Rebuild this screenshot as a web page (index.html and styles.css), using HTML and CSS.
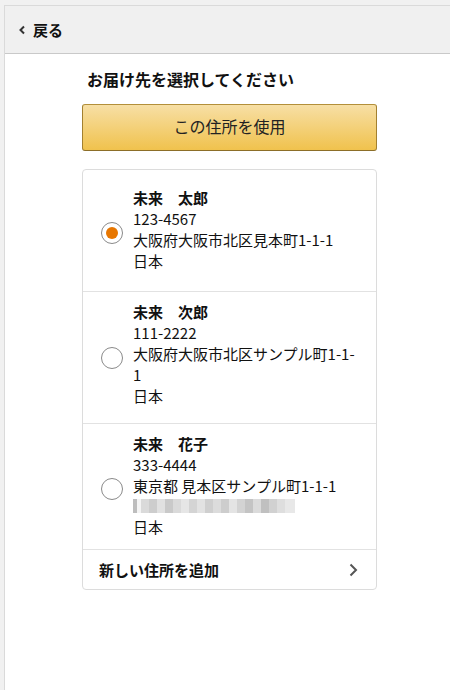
FILE: index.html
```html
<!DOCTYPE html>
<html lang="ja">
<head>
    <meta charset="UTF-8">
    <meta name="viewport" content="width=device-width, initial-scale=1.0">
    <title>お届け先を選択</title>
    <link rel="stylesheet" href="styles.css">
</head>
<body>
    <div class="frame">
        <header class="topbar">
            <a class="back" href="#">
                <svg class="back-icon" width="8" height="10" viewBox="0 0 8 10"><polyline points="6,1.5 2.5,5 6,8.5" fill="none" stroke="#333" stroke-width="2"/></svg>
                戻る
            </a>
        </header>

        <main class="content">
            <h1 class="title">お届け先を選択してください</h1>
            <button class="use-btn" type="button">この住所を使用</button>

            <ul class="addr-list">
                <li class="addr-row is-first">
                    <span class="radio checked"></span>
                    <div class="addr">
                        <div class="addr-name">未来　太郎</div>
                        <div>123-4567</div>
                        <div>大阪府大阪市北区見本町1-1-1</div>
                        <div>日本</div>
                    </div>
                </li>
                <li class="addr-row">
                    <span class="radio"></span>
                    <div class="addr">
                        <div class="addr-name">未来　次郎</div>
                        <div>111-2222</div>
                        <div>大阪府大阪市北区サンプル町1-1-1</div>
                        <div>日本</div>
                    </div>
                </li>
                <li class="addr-row is-last">
                    <span class="radio"></span>
                    <div class="addr">
                        <div class="addr-name">未来　花子</div>
                        <div>333-4444</div>
                        <div>東京都 見本区サンプル町1-1-1</div>
                        <div class="masked"><span class="mosaic"></span></div>
                        <div>日本</div>
                    </div>
                </li>
                <li class="add-row">
                    <span>新しい住所を追加</span>
                    <svg width="10" height="14" viewBox="0 0 10 14"><polyline points="2.5,1.5 8,7 2.5,12.5" fill="none" stroke="#555" stroke-width="2"/></svg>
                </li>
            </ul>
        </main>
    </div>
</body>
</html>
```

FILE: styles.css
```css
*{ box-sizing: border-box; }
html,body{ margin: 0; padding: 0; }
body{
    background: #f1f1f1;
    font-family: "Noto Sans CJK JP", "Noto Sans", sans-serif;
    color: #111;
}

.frame{
    margin: 5px 0 0 4px;
    min-height: 685px;
    background: #fff;
    border-top: 1px solid #dadada;
    border-left: 1px solid #dadada;
}

.topbar{
    height: 48px;
    background: #f0f0f0;
    border-bottom: 1px solid #c9c9c9;
    display: flex;
    align-items: center;
    padding-left: 13px;
}
.back{
    display: flex;
    align-items: center;
    gap: 7px;
    color: #111;
    text-decoration: none;
    font-size: 15px;
    font-weight: bold;
}

.content{
    width: 295px;
    margin-left: 77px;
    padding-top: 14px;
}
.title{
    margin: 0 0 14px 5px;
    font-size: 16px;
    line-height: 22px;
    font-weight: bold;
}
.use-btn{
    display: block;
    width: 295px;
    height: 47px;
    padding: 0 0 3px 0;
    border: 1px solid #a88734;
    border-color: #b38f3a #a3802f #8c6e28;
    border-radius: 3px;
    background: linear-gradient(#f7dfa5, #f0c24d);
    font-family: inherit;
    font-size: 16px;
    color: #222;
    cursor: pointer;
}

.addr-list{
    list-style: none;
    margin: 18px 0 0 0;
    padding: 0;
    border: 1px solid #dcdcdc;
    border-radius: 4px;
}
.addr-row{
    display: flex;
    align-items: center;
    padding: 9px 14px 17px 18px;
    border-bottom: 1px solid #e2e2e2;
    font-size: 15px;
    line-height: 21px;
}
.addr-row.is-first{
    min-height: 122px;
    padding-top: 7px;
    padding-bottom: 11px;
}
.addr-row.is-last{
    padding-bottom: 12px;
}
.radio{
    flex: none;
    position: relative;
    width: 22px;
    height: 22px;
    margin: 8px 10px 0 0;
    border: 1px solid #8a8a8a;
    border-radius: 50%;
}
.radio.checked::after{
    content: "";
    position: absolute;
    top: 4px;
    left: 4px;
    width: 12px;
    height: 12px;
    border-radius: 50%;
    background: #e77600;
}
.addr{ flex: 1; }
.addr-name{ font-weight: bold; }

.masked{
    height: 20px;
    display: flex;
    align-items: center;
}
.mosaic{
    display: block;
    width: 162px;
    height: 14px;
    background:
        linear-gradient(90deg,
            #bdbdbd 0 4px, #f4f4f4 4px 8px, #dadada 8px 16px, #cdcdcd 16px 24px, #e1e1e1 24px 32px,
            #c9c9c9 32px 40px, #dadada 40px 48px, #e6e6e6 48px 56px, #d4d4d4 56px 64px,
            #e2e2e2 64px 72px, #cfcfcf 72px 80px, #dcdcdc 80px 88px, #cdcdcd 88px 96px,
            #e4e4e4 96px 104px, #d3d3d3 104px 112px, #c4c4c4 112px 120px, #dbdbdb 120px 128px,
            #c0c0c0 128px 136px, #d1d1d1 136px 144px, #dedede 144px 152px, #e8e8e8 152px 162px);
}

.add-row{
    display: flex;
    align-items: center;
    justify-content: space-between;
    height: 39px;
    padding: 0 18px 0 16px;
    font-size: 15px;
    font-weight: bold;
}
```
